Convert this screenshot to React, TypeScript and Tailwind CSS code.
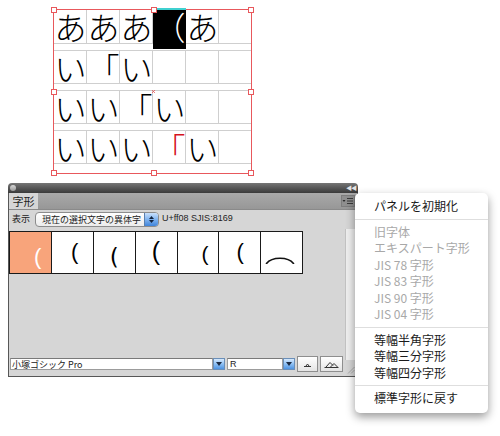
import React from 'react';

const rows: { ch: string; cls?: string }[][] = [
  [{ ch: 'あ' }, { ch: 'あ' }, { ch: 'あ' }, { ch: '（', cls: 'selected' }, { ch: 'あ' }, { ch: '' }],
  [{ ch: 'い' }, { ch: '「' }, { ch: 'い' }, { ch: '' }, { ch: '' }, { ch: '' }],
  [{ ch: 'い' }, { ch: 'い' }, { ch: '「' }, { ch: 'い' }, { ch: '' }, { ch: '' }],
  [{ ch: 'い' }, { ch: 'い' }, { ch: 'い' }, { ch: '「', cls: 'red' }, { ch: 'い' }, { ch: '' }],
];

// positions of the selection handles, relative to the frame box
const handles = [
  'left-[-3px] top-[-3px]',
  'left-[97px] top-[-3px]',
  'right-[-3px] top-[-3px]',
  'left-[-3px] top-[79px]',
  'right-[-3px] top-[79px]',
  'left-[-3px] bottom-[-3px]',
  'left-[97px] bottom-[-3px]',
  'right-[-3px] bottom-[-3px]',
];

const glyphs = [
  { ch: '(', cls: 'bg-[#f8a47b] text-white pl-[24px] pt-[14px] text-[22px] font-light' },
  { ch: '(', cls: 'bg-white text-black pl-[19px] pt-[9px] text-[22px]' },
  { ch: '(', cls: "bg-white text-black pl-[16px] pt-[14px] text-[23px] font-['DejaVu_Sans',sans-serif]" },
  { ch: '(', cls: 'bg-white text-black pl-[16px] pt-[7px] text-[25px]' },
  { ch: '(', cls: 'bg-white text-black pl-[24px] pt-[11px] text-[21px]' },
  { ch: '(', cls: 'bg-white text-black pl-[17px] pt-[9px] text-[22px]' },
];

const menu: { label: string; disabled?: boolean; sep?: boolean }[] = [
  { label: 'パネルを初期化' },
  { label: '', sep: true },
  { label: '旧字体', disabled: true },
  { label: 'エキスパート字形', disabled: true },
  { label: 'JIS 78 字形', disabled: true },
  { label: 'JIS 83 字形', disabled: true },
  { label: 'JIS 90 字形', disabled: true },
  { label: 'JIS 04 字形', disabled: true },
  { label: '', sep: true },
  { label: '等幅半角字形' },
  { label: '等幅三分字形' },
  { label: '等幅四分字形' },
  { label: '', sep: true },
  { label: '標準字形に戻す' },
];

const BlueArrow = () => (
  <div className="w-[12px] h-[12px] bg-gradient-to-b from-[#d6e9fd] via-[#8dc0f4] to-[#4e93e2] border border-[#6b8fb8] flex items-center justify-center">
    <svg width="6" height="4" viewBox="0 0 6 4">
      <path d="M0 0h6L3 4z" fill="#1b2a44" />
    </svg>
  </div>
);

export default function App() {
  return (
    <div className="relative w-[500px] h-[436px] overflow-hidden bg-white font-['Liberation_Sans','Noto_Sans_CJK_JP',sans-serif]">
      {/* Text frame with glyph grid */}
      <div className="pt-[9px] pl-[53px]">
        <div className="relative w-[199px] h-[165px] border border-[#e8585c]">
          <div className="absolute left-[99px] top-[-2px] w-[33px] h-[2px] bg-[#3fd0d0]" />
          <div className="flex flex-col">
            {rows.map((row, ri) => (
              <div
                key={ri}
                className={
                  ri === 0
                    ? 'flex h-[34px] border-b border-[#cfcfcf]'
                    : 'flex h-[34px] mt-[6px] border-y border-[#cfcfcf]'
                }
              >
                {row.map((c, ci) => (
                  <div
                    key={ci}
                    className={
                      ci === 5
                        ? 'relative w-[32px] h-full'
                        : 'relative w-[33px] h-full border-r border-[#cfcfcf]'
                    }
                  >
                    {c.cls === 'selected' && <div className="absolute left-0 top-0 w-[33px] h-[39px] bg-black" />}
                    <span
                      className={
                        'relative block w-[33px] text-center text-[32px] leading-[32px] font-["Noto_Sans_CJK_JP",sans-serif] font-light ' +
                        (c.cls === 'selected' ? 'text-white' : c.cls === 'red' ? 'text-[#d4141e]' : 'text-black')
                      }
                    >
                      {c.ch}
                    </span>
                  </div>
                ))}
              </div>
            ))}
          </div>
          {handles.map((h, i) => (
            <div key={i} className={'absolute w-[6px] h-[6px] bg-white border border-[#e8585c] ' + h} />
          ))}
          <svg className="absolute left-[97px] top-[79px]" width="5" height="5" viewBox="0 0 5 5">
            <path d="M1 1l3 3M4 1L1 4" stroke="#e8585c" strokeWidth="0.8" />
          </svg>
        </div>
      </div>

      {/* Glyphs panel */}
      <div className="ml-[8px] mt-[9px] w-[350px]">
        <div className="flex h-[10px] items-center justify-between rounded-t-[4px] bg-gradient-to-b from-[#767676] to-[#3a3a3a] px-[2px]">
          <div className="w-[6px] h-[6px] rounded-full bg-gradient-to-b from-[#d8d8d8] to-[#9a9a9a]" />
          <span className="text-[6px] leading-none tracking-[-1px] text-[#e4e4e4]">◀◀</span>
        </div>
        <div className="border-x border-b border-[#575757]">
          <div className="flex h-[17px] items-end justify-between bg-gradient-to-b from-[#a9a9a9] to-[#979797] border-b border-[#8a8a8a]">
            <div className="flex h-[16px] w-[29px] items-center justify-center bg-[#d6d6d6] text-[11px] text-[#1e1e1e] font-['Noto_Sans_CJK_JP',sans-serif]">
              字形
            </div>
            <div className="mb-[2px] mr-[2px] flex h-[12px] w-[14px] items-center justify-center bg-[#8f8f8f] border border-[#7d7d7d]">
              <svg width="12" height="8" viewBox="0 0 12 8">
                <path d="M0.5 3h3L2 5z" fill="#2a2a2a" />
                <path d="M5 1.5h6M5 4h6M5 6.5h6" stroke="#3a3a3a" strokeWidth="1" />
              </svg>
            </div>
          </div>
          <div className="flex h-[166px] bg-[#d6d6d6]">
            <div className="flex flex-1 flex-col">
              <div className="flex h-[17px] items-center pt-[1px]">
                <span className="ml-[3px] text-[9px] text-[#222] font-['Noto_Sans_CJK_JP',sans-serif]">表示</span>
                <div className="ml-[5px] flex h-[15px] w-[124px] items-center overflow-hidden rounded-[4px] border border-[#8c8c8c] bg-gradient-to-b from-white to-[#ececec]">
                  <span className="flex-1 pl-[6px] text-[9px] leading-none text-[#222] font-['Noto_Sans_CJK_JP',sans-serif]">
                    現在の選択文字の異体字
                  </span>
                  <div className="flex h-full w-[14px] flex-col items-center justify-center gap-[1px] bg-gradient-to-b from-[#c9e0fb] via-[#7fb3ef] to-[#3f84da] border-l border-[#5a7fae]">
                    <svg width="5" height="3" viewBox="0 0 5 3">
                      <path d="M0 3h5L2.5 0z" fill="#13233d" />
                    </svg>
                    <svg width="5" height="3" viewBox="0 0 5 3">
                      <path d="M0 0h5L2.5 3z" fill="#13233d" />
                    </svg>
                  </div>
                </div>
                <span className="ml-[3px] text-[9px] text-[#1e1e1e]">U+ff08 SJIS:8169</span>
              </div>

              <div className="mt-[4px] flex h-[43px] w-[294px] border-y border-l border-[#1a1a1a]">
                {glyphs.map((g, i) => (
                  <div key={i} className={'w-[42px] h-full border-r border-[#1a1a1a] leading-none ' + g.cls}>
                    <span className="block leading-none">{g.ch}</span>
                  </div>
                ))}
                <div className="w-[42px] h-full border-r border-[#1a1a1a] bg-white">
                  <svg className="mt-[24px] ml-[4px]" width="30" height="8" viewBox="0 0 30 8">
                    <path d="M1.5 7.5C7 0.5 23 0.5 28.5 7.5" fill="none" stroke="#111" strokeWidth="1.6" strokeLinecap="round" />
                  </svg>
                </div>
              </div>

              <div className="mt-auto mb-[4px] ml-[1px] flex h-[16px] items-center">
                <div className="flex h-[12px] w-[203px] items-center bg-white border border-[#9c9c9c] border-t-[#7a7a7a]">
                  <span className="pl-[1px] text-[9px] leading-none text-[#222] font-['Noto_Sans_CJK_JP',sans-serif]">小塚ゴシック Pro</span>
                </div>
                <BlueArrow />
                <div className="ml-[2px] flex h-[12px] w-[56px] items-center bg-white border border-[#9c9c9c] border-t-[#7a7a7a]">
                  <span className="pl-[2px] text-[9px] leading-none text-[#222]">R</span>
                </div>
                <BlueArrow />
                <div className="ml-[2px] flex h-[16px] w-[21px] items-center justify-center bg-gradient-to-b from-white to-[#e4e4e4] border border-[#8e8e8e]">
                  <svg width="9" height="5" viewBox="0 0 9 5">
                    <path d="M1 4.5h7M3 4L4.5 2 6 4" fill="none" stroke="#333" strokeWidth="1" />
                  </svg>
                </div>
                <div className="ml-[2px] flex h-[16px] w-[23px] items-center justify-center bg-gradient-to-b from-white to-[#e4e4e4] border border-[#8e8e8e]">
                  <svg width="15" height="7" viewBox="0 0 15 7">
                    <path d="M0.5 6.5h14M2 6L6 1.5 9 4.5M6.5 6L10 2.5 13.5 6" fill="none" stroke="#333" strokeWidth="1" />
                  </svg>
                </div>
              </div>
            </div>
            <div className="mr-[2px] ml-[1px] flex w-[10px] flex-col">
              <div className="mt-[19px] flex-1 bg-[#efefef] border-l border-[#c2c2c2]" />
              <svg className="mb-[2px] mt-[4px]" width="10" height="10" viewBox="0 0 10 10">
                <path d="M3 9.5L9.5 3M6 9.5L9.5 6" stroke="#a8a8a8" strokeWidth="1" />
              </svg>
            </div>
          </div>
        </div>
      </div>

      {/* Panel flyout menu */}
      <div className="absolute left-[355px] top-[193px] w-[133px] rounded-[5px] bg-white pt-[5px] pb-[6px] shadow-[0_4px_10px_rgba(0,0,0,0.4)] font-['Noto_Sans_CJK_JP',sans-serif]">
        {menu.map((m, i) =>
          m.sep ? (
            <div key={i} className="my-[4px] h-px bg-[#dedede]" />
          ) : (
            <div
              key={i}
              className={
                'flex h-[16.5px] items-center pl-[19px] text-[12px] leading-none ' +
                (m.disabled ? 'text-[#a8a8a8]' : 'text-[#1a1a1a]')
              }
            >
              {m.label}
            </div>
          )
        )}
      </div>
    </div>
  );
}
